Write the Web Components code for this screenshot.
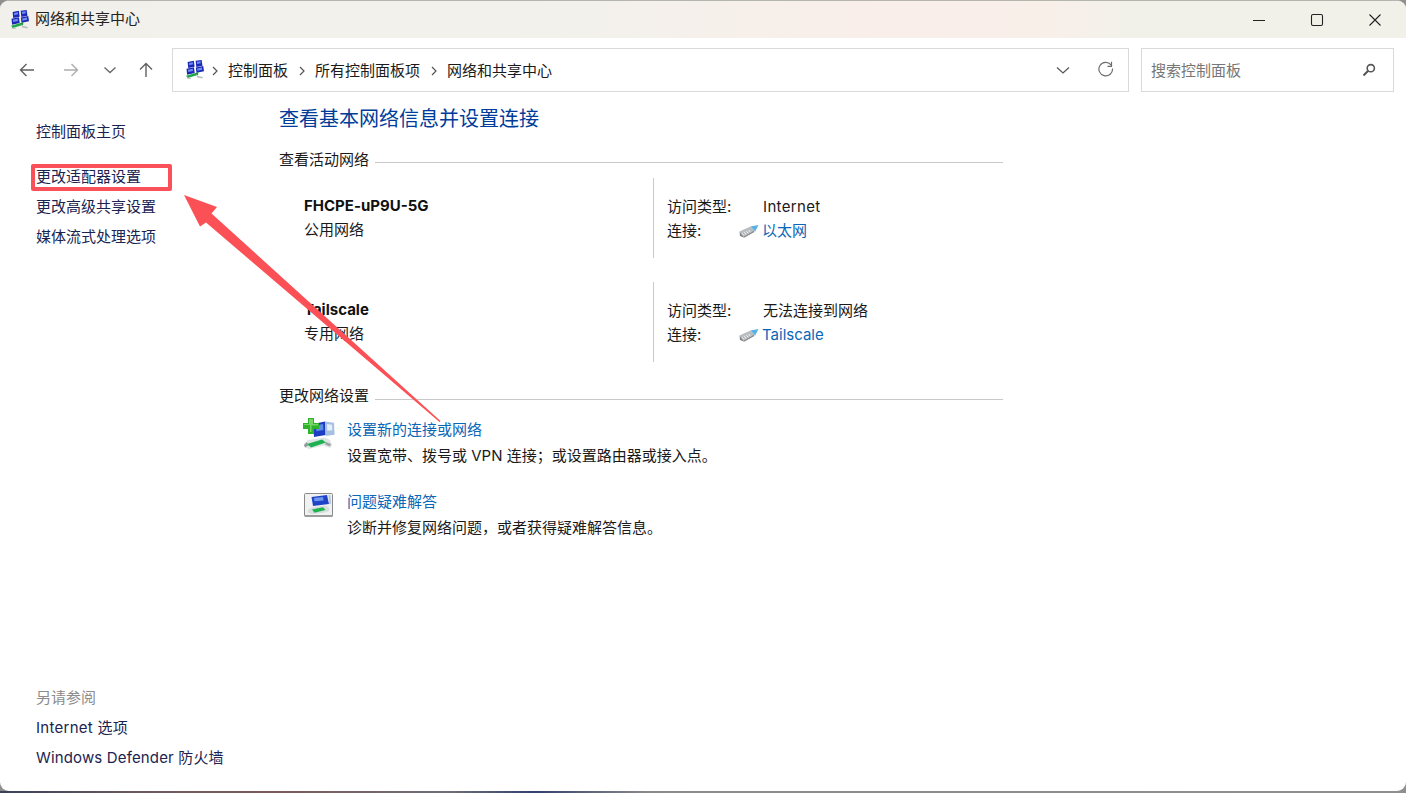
<!DOCTYPE html>
<html lang="zh-CN"><head><meta charset="utf-8"><title>网络和共享中心</title>
<style>
html,body{margin:0;padding:0;background:#fff;}
body{width:1406px;height:793px;overflow:hidden;font:15px/24px "Inter","Noto Sans CJK SC",sans-serif;color:#1a1a1a;}
</style></head><body>
<template id="t-net"><svg viewBox="0 0 20 20" width="100%" height="100%" style="display:block">
<g fill="#1a28b4"><path d="M2.800 2.200L9.300 .8l.8 6.400-6.700 1.300z"/><path d="M11.200 .8l6.300-.8.900 6-6.500 1.300z"/><path d="M1.600 9.200l7.800-1.500.8 6-8 1.700z"/><path d="M11.400 8l7.800-1.600.8 5.400-7.900 1.600z"/></g>
<g fill="#6f8cf0"><path d="M4.200 3.200l4-.8.300 2.200-4 .8z"/><path d="M12.400 1.800l4-.6.300 2.200-4 .7z"/><path d="M3.100 10.200l5-1 .3 2.400-5 1z"/><path d="M12.800 9l5-1 .3 2.200-5 1z"/></g>
<path d="M1.200 16.600l9.800-2.800 1.600 2.200-9.800 2.900z" fill="#1fa648"/><path d="M10.300 14.300l3.800-2-.4 4z" fill="#1b9440"/>
<path d="M12.800 16.600l6 1.200-.5 1.700-6.100-1.300zM2 18.600l4.600.5-.5.900-4.500-.4z" fill="#b4bcc0"/></svg></template>

<template id="t-eth"><svg viewBox="0 0 20 13" width="20" height="13" style="display:block">
<path d="M.5 6.500L11.500 1.500l3.500 3.800L4.500 11.500z" fill="#b9bdc0"/>
<path d="M.5 6.500l4 5 .8 1.300L1 11z" fill="#7f8386"/><path d="M4.500 11.500L15 5.300l.5 1.700L5.300 12.800z" fill="#8e9295"/>
<path d="M3 8.300l1.800 2.200M5.200 7.200l1.800 2.200M7.400 6.100l1.800 2.200M9.600 5l1.800 2.200" stroke="#eef0f1" stroke-width="1"/>
<path d="M11.500 1.500L19.500 0l-3.300 6.500-1.200-1.200z" fill="#58b0e4"/></svg></template>

<template id="t-add"><svg viewBox="0 0 32 33" width="32" height="33" style="display:block">
<path d="M10 6l12-2.500.6 13.500-11.600 2z" fill="#1f3dc4"/><path d="M22 3.500l9 1.300.6 12-9 1.200z" fill="#a5c0e0"/>
<path d="M13 7.500l7-1.400.4 6-7 1.200z" fill="#5d8ce6"/><path d="M24 6l5 .8.300 5.400-5 .6z" fill="#e6eef7"/>
<path d="M5 0h6v5h5v6h-5v5H5v-5H0V5h5z" fill="#2db32b"/><path d="M6 1h4v5h5v1.500H8.500V14H7V7H1V6h5z" fill="#8ce07a" opacity=".75"/>
<path d="M1 26l4-4 17-2.500 5 2.500 2 5-2 3-6-2.500-15 3.500-4-1.500z" fill="#dfe4e4"/><path d="M4 26l15-4.500 4 3-15 5z" fill="#1eb151"/>
<path d="M1 27l3-3 1.200 3.500-3.200 2z" fill="#8e9999"/><path d="M23 24l5 2-1 2.500-5-2z" fill="#9ba5a5"/></svg></template>

<template id="t-fix"><svg viewBox="0 0 30 25" width="30" height="25" style="display:block">
<rect x=".5" y=".5" width="28" height="23" rx="1" fill="#f0f1f2" stroke="#8a8a8a"/><rect x="1" y="22" width="27.500" height="2" fill="#9c9c9c"/>
<path d="M7.500 4L23 2l2 9-16 2z" fill="#2044c8"/><path d="M10 5l9-1 .6 3.500-9 .8z" fill="#6f98ee"/>
<path d="M24.500 2l2 .3.600 8.500-2 .3z" fill="#b9c9da"/>
<path d="M4 17l4-2.500 13-2 4 2v3.500l-4 1.500-13 1.500-4-1.500z" fill="#d7dcdd"/><path d="M8 16.500l11-2.300 2.500 2.800-11 2.800z" fill="#1fb350"/></svg></template>

<script>
const tpl = id => document.getElementById(id).content.cloneNode(true);
function def(name, css, html, setup){
  customElements.define(name, class extends HTMLElement{
    constructor(){super();const r=this.attachShadow({mode:"open"});r.innerHTML=`<style>${css}</style>${html}`;}
    connectedCallback(){ if(setup) setup(this,this.shadowRoot); }
  });
}
def("net-icon",":host{display:block;width:var(--s,18px);height:var(--s,18px);flex:none}","",(h,r)=>{if(!r.querySelector("svg"))r.append(tpl("t-net"))});
def("eth-icon",":host{display:block;width:20px;height:13px;flex:none}","",(h,r)=>{if(!r.querySelector("svg"))r.append(tpl("t-eth"))});

def("title-bar",`:host{display:flex;align-items:center;height:37px;flex:none;box-sizing:border-box;padding-left:10px;
  background:linear-gradient(90deg,#f1f0ea 0,#f3f1ec 42%,#f9eee9 62%,#f9efe9 74%,#f2f1e9 80%,#f2f1e9 100%);}
  .t{margin-left:6px;font-size:15px;color:#222;flex:1;padding-bottom:2px}
  .b{width:58px;height:37px;display:flex;align-items:center;justify-content:center}
  .w{display:flex;margin-right:2px}svg{display:block}`,
  `<net-icon style="--s:19px"></net-icon><span class="t"><slot></slot></span>
  <div class="w"><div class="b"><svg width="14" height="14" viewBox="0 0 14 14"><path d="M1 7.500h12" stroke="#222" stroke-width="1.100"/></svg></div>
  <div class="b"><svg width="14" height="14" viewBox="0 0 14 14"><rect x="1.500" y="1.500" width="11" height="11" rx="1.500" fill="none" stroke="#222" stroke-width="1.100"/></svg></div>
  <div class="b"><svg width="14" height="14" viewBox="0 0 14 14"><path d="M1.500 1.500l11 11M12.500 1.500l-11 11" stroke="#222" stroke-width="1.100"/></svg></div></div>`);

def("nav-bar",`:host{display:flex;align-items:center;height:43px;margin-top:10px;flex:none;padding-left:16px;padding-right:12px;}
  .n{width:22px;height:22px;display:flex;align-items:center;justify-content:center;flex:none}svg{display:block}
  .n1{margin-right:22px}.n2{margin-right:17px}.n3{margin-right:14px}.n4{margin-right:15px}`,
  `<div class="n n1"><svg width="18" height="18" viewBox="0 0 18 18"><path d="M16 9H2.500M8.500 3L2.500 9l6 6" fill="none" stroke="#606060" stroke-width="1.400"/></svg></div>
   <div class="n n2"><svg width="18" height="18" viewBox="0 0 18 18"><path d="M2 9h13.500M9.500 3l6 6-6 6" fill="none" stroke="#adadad" stroke-width="1.400"/></svg></div>
   <div class="n n3"><svg width="14" height="14" viewBox="0 0 14 14"><path d="M1.500 4.500L7 9.500l5.500-5" fill="none" stroke="#6a6a6a" stroke-width="1.400"/></svg></div>
   <div class="n n4"><svg width="18" height="18" viewBox="0 0 18 18"><path d="M9 16V2.500M3 8.500l6-6 6 6" fill="none" stroke="#606060" stroke-width="1.400"/></svg></div>
   <slot></slot>`);

def("address-box",`:host{display:flex;align-items:center;box-sizing:border-box;width:957px;height:44px;border:1px solid #d9d9d9;background:#fff;padding-left:12px;flex:none;margin-right:12px}
  svg{display:block}.sp{flex:1}
  .c{margin-right:26px;width:16px;height:16px}.r{margin-right:13px;width:18px;height:18px;margin-bottom:3px}`,
  `<net-icon style="--s:19px;margin-right:-3px"></net-icon><slot></slot><span class="sp"></span>
  <svg class="c" viewBox="0 0 16 16"><path d="M2 5.500L8 11l6-5.500" fill="none" stroke="#555" stroke-width="1.200"/></svg>
  <svg class="r" viewBox="0 0 18 18"><path d="M14.500 2.800V7.300H10.500M15.500 9.500A6.800 6.800 0 1 1 14 5.800" fill="none" stroke="#6c6c6c" stroke-width="1.200"/></svg>`);

def("crumb-item",`:host{display:flex;align-items:center;font-size:15px;color:#1a1a1a;white-space:nowrap;padding-top:2px}
  svg{display:block;margin:0 10px 0 11px}`,
  `<svg width="6" height="10" viewBox="0 0 6 10"><path d="M1 1l4 4-4 4" fill="none" stroke="#555" stroke-width="1.200"/></svg><slot></slot>`);

def("search-box",`:host{display:flex;align-items:center;box-sizing:border-box;width:253px;height:44px;border:1px solid #d9d9d9;background:#fff;padding:0 17px 0 9px;flex:none;color:#767676;font-size:15px}
  span{flex:1;padding-top:2px}svg{display:block}`,
  `<span><slot></slot></span><svg width="14" height="14" viewBox="0 0 14 14"><circle cx="8.800" cy="5.200" r="3.600" fill="none" stroke="#555" stroke-width="1.600"/><path d="M6.200 7.800L1.500 12.500" stroke="#555" stroke-width="2"/></svg>`);

def("side-link",`:host{display:block;line-height:30px;height:30px;font-size:15px;color:#1b2450;white-space:nowrap}
  :host([muted]){color:#8c8c8c}`,`<slot></slot>`);

def("side-bar",`:host{display:flex;flex-direction:column;box-sizing:border-box;width:279px;flex:none;padding:17px 0 18px 36px}
  .top{flex:1}.g{margin-bottom:15px}`,
  `<div class="top"><div class="g"><slot name="home"></slot></div><slot name="tasks"></slot></div><slot name="also"></slot>`);

def("section-head",`:host{display:flex;height:20px;line-height:20px;font-size:15px;color:#1a1a1a;white-space:nowrap}
  i{flex:1;height:1px;background:#c9c9c9;margin:var(--lt,12px) 0 0 6px}`,`<slot></slot><i></i>`);

def("net-row",`:host{display:flex;height:80px;font-size:15px}
  .l{box-sizing:border-box;width:374px;padding:16px 0 0 25px;line-height:24px}
  .name{font-weight:700;color:#111;font-size:15px}
  .r{box-sizing:border-box;flex:1;border-left:1px solid #c9c9c9;padding:17px 0 0 13px;line-height:24px}
  .f{display:flex}.k{width:96px;flex:none}.k2{width:72px;flex:none}
  .v{display:flex;align-items:center}
  eth-icon{margin-right:3px}
  .acc{letter-spacing:var(--acc-ls,0)}
  .a{color:#0a66b7}`,
  `<div class="l"><div class="name"></div><div class="type"></div></div>
   <div class="r"><div class="f"><span class="k">访问类型:</span><span class="acc"></span></div>
   <div class="f"><span class="k2">连接:</span><span class="v"><eth-icon></eth-icon><span class="a"></span></span></div></div>`,
  (h,r)=>{r.querySelector(".name").textContent=h.getAttribute("name");r.querySelector(".type").textContent=h.getAttribute("type");
    r.querySelector(".acc").textContent=h.getAttribute("access");r.querySelector(".a").textContent=h.getAttribute("conn");});

def("task-item",`:host{display:flex;padding-left:24px;font-size:15px}
  .i{box-sizing:border-box;width:32px;margin-right:12px;flex:none;padding-top:var(--ipt,1px);padding-left:var(--ipl,0)}
  .a{color:#0a66b7;line-height:24px}
  .d{line-height:24px;margin-top:2px;color:#1a1a1a;white-space:nowrap}`,
  `<div class="i"><slot name="icon"></slot></div><div><div class="a"><slot name="link"></slot></div><div class="d"><slot name="desc"></slot></div></div>`);

def("add-icon",":host{display:block;width:32px}","",(h,r)=>{if(!r.querySelector("svg"))r.append(tpl("t-add"))});
def("fix-icon",":host{display:block;width:30px}","",(h,r)=>{if(!r.querySelector("svg"))r.append(tpl("t-fix"))});

def("main-panel",`:host{display:block;box-sizing:border-box;width:724px;padding-top:5px;flex:none}
  h1{margin:0 0 17px;font-size:20px;font-weight:400;line-height:28px;color:#003c9a;white-space:nowrap}`,
  `<h1><slot name="title"></slot></h1><slot></slot>`);

def("note-arrow",`:host{position:absolute;left:0;top:0;width:1406px;height:793px;pointer-events:none}
  svg{position:absolute;left:0;top:0}
  .box{position:absolute;left:31px;top:164px;width:141px;height:27px;box-sizing:border-box;border:4px solid #f9505a;border-radius:2px}`,
  `<div class="box"></div><svg width="1406" height="793" viewBox="0 0 1406 793"><path d="M184 195L217 207 211.500 213.500 440.500 421 439.500 422 206 222.500 200 226.500z" fill="#fb5056"/></svg>`);

def("app-window",`:host{display:flex;flex-direction:column;width:1406px;height:791px;background:#fff;border-radius:9px;overflow:hidden;position:relative;box-sizing:border-box;border-top:1px solid #b5b5b0}
  .body{display:flex;flex:1;min-height:0;margin-top:9px}`,
  `<slot name="title"></slot><slot name="nav"></slot><div class="body"><slot name="side"></slot><slot name="main"></slot></div>`);

def("desk-strip",`:host{display:block;height:2px;background:linear-gradient(90deg,#39405a 0,#6d5a5e 10%,#7d5a5a 20%,#6e6e78 32%,#33406e 38%,#8a8a88 46%,#8f8f8d 100%)}`,``);
def("desk-root",`:host{display:block;position:relative;width:1406px;height:793px;background:#8f8f8d;overflow:hidden}`,`<slot></slot>`);
</script>

<desk-root>
 <app-window>
  <title-bar slot="title">网络和共享中心</title-bar>
  <nav-bar slot="nav">
    <address-box>
      <crumb-item>控制面板</crumb-item><crumb-item>所有控制面板项</crumb-item><crumb-item>网络和共享中心</crumb-item>
    </address-box>
    <search-box>搜索控制面板</search-box>
  </nav-bar>
  <side-bar slot="side">
    <side-link slot="home">控制面板主页</side-link>
    <div slot="tasks">
      <side-link>更改适配器设置</side-link>
      <side-link>更改高级共享设置</side-link>
      <side-link>媒体流式处理选项</side-link>
    </div>
    <div slot="also">
      <side-link muted>另请参阅</side-link>
      <side-link style="letter-spacing:.27px">Internet 选项</side-link>
      <side-link style="letter-spacing:.15px">Windows Defender 防火墙</side-link>
    </div>
  </side-bar>
  <main-panel slot="main">
    <span slot="title">查看基本网络信息并设置连接</span>
    <section-head style="margin-bottom:8px">查看活动网络</section-head>
    <net-row name="FHCPE-uP9U-5G" type="公用网络" access="Internet" conn="以太网" style="margin-bottom:24px;--acc-ls:.35px"></net-row>
    <net-row name="Tailscale" type="专用网络" access="无法连接到网络" conn="Tailscale" style="margin-bottom:24px"></net-row>
    <section-head style="margin-bottom:12px;--lt:13px">更改网络设置</section-head>
    <task-item style="margin-bottom:22px;--ipt:0px">
      <add-icon slot="icon"></add-icon>
      <span slot="link">设置新的连接或网络</span>
      <span slot="desc">设置宽带、拨号或 VPN 连接；或设置路由器或接入点。</span>
    </task-item>
    <task-item style="--ipt:3px;--ipl:1px">
      <fix-icon slot="icon"></fix-icon>
      <span slot="link">问题疑难解答</span>
      <span slot="desc">诊断并修复网络问题，或者获得疑难解答信息。</span>
    </task-item>
  </main-panel>
 </app-window>
 <desk-strip></desk-strip>
 <note-arrow></note-arrow>
</desk-root>
</body></html>
